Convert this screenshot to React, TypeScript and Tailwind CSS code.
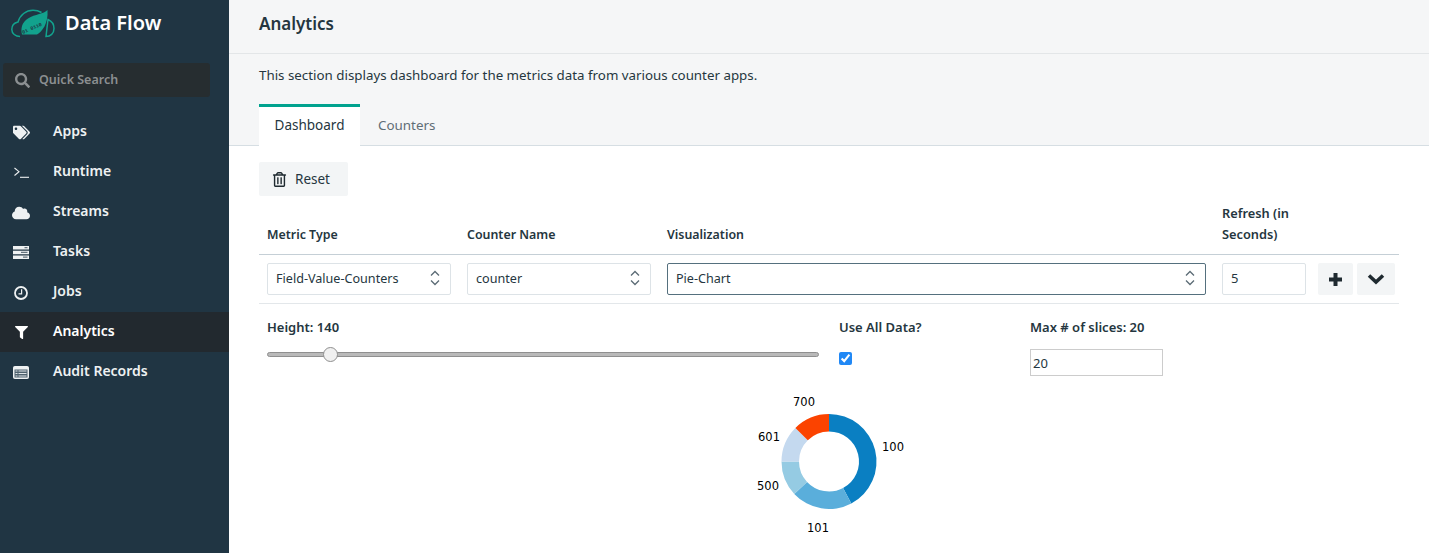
import { FaCloud, FaFilter, FaRegTrashAlt, FaSearch, FaTags } from 'react-icons/fa';
import type { ReactNode } from 'react';

function TerminalIcon() {
  return (
    <svg width="15" height="11" viewBox="0 0 15 11" fill="none" stroke="currentColor" strokeWidth="1.1">
      <path d="M.5 1 5 4.700 .5 8.500" />
      <path d="M6 10.300H15" />
    </svg>
  );
}

function TasksIcon() {
  return (
    <svg width="16" height="13" viewBox="0 0 16 13">
      <path d="M0 0h16v3.500H0zM0 4.700h16v3.500H0zM0 9.500h16V13H0z" fill="#eef1f2" />
      <path d="M11.500 1h3v1.200h-3zM8 5.800h6.500V7H8zM10 10.600h4.500v1.200H10z" fill="#66757f" />
    </svg>
  );
}

function ClockIcon() {
  return (
    <svg width="14" height="14" viewBox="0 0 14 14" fill="none" stroke="currentColor">
      <circle cx="7" cy="7" r="6" strokeWidth="1.800" />
      <path d="M7.600 3.200V7.800H4.500" strokeWidth="1.200" />
    </svg>
  );
}

function AuditIcon() {
  return (
    <svg width="16" height="13" viewBox="0 0 16 13" fill="none">
      <rect x="0.5" y="0.5" width="15" height="12" rx="1" fill="#eef1f2" stroke="#eef1f2" />
      <rect x="1.500" y="3.500" width="13" height="8" fill="#4f626e" />
      <path d="M2.500 5h2M5.500 5h8M2.500 7.500h2M5.500 7.500h8M2.500 10h2M5.500 10h8" stroke="#dfe4e7" strokeWidth="1.100" />
    </svg>
  );
}

function Logo() {
  return (
    <svg width="44" height="29" viewBox="0 0 44 29" fill="none">
      {/* cloud outline */}
      <path
        d="M9 27.500C4.500 27.500 .8 24.500 .8 20.500 .8 16.500 3.500 13.800 7 13 9 6 15 1.200 22 1.200 25 1.200 28 2 30.500 3.500M37 10.500C40.500 12 43 15.500 43 19.500 43 24.500 39.500 27.500 35 27.500Z"
        stroke="#12a28d"
        strokeWidth="1.500"
      />
      {/* leaf */}
      <path d="M36.500 1C33 5 24 5 17 9.500 11 13.500 9.500 19 11 25.500H26C31 22.500 37.500 15 36.500 1Z" fill="#12a28d" />
      <text
        x="12"
        y="25"
        transform="rotate(-24 12 25)"
        fontSize="5"
        fontWeight="700"
        fill="#203543"
        fontFamily="Liberation Mono, monospace"
      >
        01 0110
      </text>
    </svg>
  );
}

const navItems: { label: string; icon: ReactNode; active?: boolean }[] = [
  { label: 'Apps', icon: <FaTags size={17} /> },
  { label: 'Runtime', icon: <TerminalIcon /> },
  { label: 'Streams', icon: <FaCloud size={18} /> },
  { label: 'Tasks', icon: <TasksIcon /> },
  { label: 'Jobs', icon: <ClockIcon /> },
  { label: 'Analytics', icon: <FaFilter size={13} />, active: true },
  { label: 'Audit Records', icon: <AuditIcon /> },
];

function Chevrons() {
  return (
    <svg
      className="absolute right-[11px] top-[7px] pointer-events-none text-[#5b6b75]"
      width="10"
      height="16"
      viewBox="0 0 10 16"
      fill="none"
      stroke="currentColor"
      strokeWidth="1.3"
    >
      <path d="M1 5.500 5 1.500 9 5.500" />
      <path d="M1 10.500 5 14.500 9 10.500" />
    </svg>
  );
}

function Select({ value, dark }: { value: string; dark?: boolean }) {
  return (
    <div className="relative">
      <select
        defaultValue={value}
        className={`block w-full h-8 appearance-none rounded-[2px] border bg-white pl-2 pr-6 text-[12.6px] text-[#253640] ${dark ? 'border-[#55707e]' : 'border-[#dde3e7]'}`}
      >
        <option>{value}</option>
      </select>
      <Chevrons />
    </div>
  );
}

// arc between two angles measured clockwise from the top
function arc(from: number, to: number) {
  const cx = 829;
  const cy = 461.5;
  const R = 47.5;
  const r = 30;
  const pt = (rad: number, a: number) => {
    const t = (a * Math.PI) / 180;
    return `${(cx + rad * Math.sin(t)).toFixed(2)} ${(cy - rad * Math.cos(t)).toFixed(2)}`;
  };
  const large = to - from > 180 ? 1 : 0;
  return `M${pt(R, from)}A${R} ${R} 0 ${large} 1 ${pt(R, to)}L${pt(r, to)}A${r} ${r} 0 ${large} 0 ${pt(r, from)}Z`;
}

const slices = [
  { from: 0, to: 152, color: '#0a7fc2' },
  { from: 152, to: 227, color: '#5aaedb' },
  { from: 227, to: 270, color: '#95cbe3' },
  { from: 270, to: 315, color: '#c4d9ef' },
  { from: 315, to: 360, color: '#fb4300' },
];

const labels = [
  { text: '100', x: 893, y: 451 },
  { text: '101', x: 818, y: 532 },
  { text: '500', x: 768, y: 490 },
  { text: '601', x: 769, y: 441 },
  { text: '700', x: 804, y: 406 },
];

export default function App() {
  return (
    <div className="flex h-screen overflow-hidden bg-white text-[13px] text-[#253640] font-['Noto_Sans','Liberation_Sans',sans-serif]">
      {/* Sidebar */}
      <aside className="w-[229px] shrink-0 bg-[#203543] text-[#eef1f2]">
        <div className="flex h-[44px] items-center pl-[11px] pt-[2px]">
          <Logo />
          <span className="ml-[10px] text-[20px] font-semibold text-white">Data Flow</span>
        </div>
        <div className="ml-[3px] mt-[19px] flex h-[34px] w-[207px] items-center gap-[9px] rounded-[3px] bg-[#262d30] pl-3 text-[#8b8f91]">
          <FaSearch size={15} />
          <span className="text-[12.5px] font-semibold">Quick Search</span>
        </div>
        <nav className="mt-[15px]">
          {navItems.map((item) => (
            <div key={item.label} className={`flex h-10 items-center ${item.active ? 'bg-[#22292f] text-white' : ''}`}>
              <span className="mt-[1px] flex w-[53px] justify-center pr-[11px]">{item.icon}</span>
              <span className="mb-[4px] text-[14px] font-semibold">{item.label}</span>
            </div>
          ))}
        </nav>
      </aside>

      {/* Main */}
      <main className="min-w-0 flex-1">
        <header className="flex h-[54px] items-center border-b border-[#e3e6e8] bg-[#f5f6f7] px-[30px] pb-[6px]">
          <h1 className="text-[17px] font-semibold">Analytics</h1>
        </header>

        <div className="h-[92px] border-b border-[#d6dee3] bg-[#f5f6f7] px-[30px]">
          <p className="pt-[12px] text-[13.33px] leading-[18px]">
            This section displays dashboard for the metrics data from various counter apps.
          </p>
          <div className="mt-[20px] flex items-start">
            <div className="flex h-[43px] w-[101px] items-center justify-center border-t-[3px] border-[#00a28e] bg-white pb-[4px] text-[13.5px]">
              Dashboard
            </div>
            <div className="ml-[18px] flex h-[43px] items-center pb-[1px] text-[13.4px] text-[#5f6d76]">Counters</div>
          </div>
        </div>

        <div className="px-[30px]">
          <button className="mt-4 flex h-[34px] w-[89px] items-center gap-[8px] rounded-[2px] bg-[#f3f5f6] pl-[13px] text-[13.5px]">
            <FaRegTrashAlt size={15} className="text-[#1f2a30]" />
            Reset
          </button>

          <div className="mt-[7px] grid grid-cols-[200px_200px_555px_100px_85px] items-end border-b border-[#c5cfd6] pb-[9px] text-[12.4px] font-semibold leading-[21px]">
            <div className="px-2">Metric Type</div>
            <div className="px-2">Counter Name</div>
            <div className="px-2">Visualization</div>
            <div className="px-2 text-[12.8px]">Refresh (in Seconds)</div>
            <div />
          </div>

          <div className="grid h-[49px] grid-cols-[200px_200px_555px_100px_85px] items-start border-b border-[#e3e7ea] pt-2">
            <div className="px-2"><Select value="Field-Value-Counters" /></div>
            <div className="px-2"><Select value="counter" /></div>
            <div className="px-2"><Select value="Pie-Chart" dark /></div>
            <div className="px-2">
              <input
                readOnly
                value="5"
                className="block h-8 w-full rounded-[2px] border border-[#dde3e7] pb-[2px] pl-2 text-[13px]"
              />
            </div>
            <div className="flex gap-1 pl-1">
              <button className="flex h-8 w-[35px] items-center justify-center rounded-[2px] bg-[#f3f5f6] text-[#1f2a30]">
                <svg width="15" height="15" viewBox="0 0 15 15" fill="currentColor">
                  <path d="M5.500 1h4v4.500H14v4H9.500V14h-4V9.500H1v-4h4.500Z" />
                </svg>
              </button>
              <button className="flex h-8 w-[38px] items-center justify-center rounded-[2px] bg-[#f3f5f6] text-[#1f2a30]">
                <svg width="18" height="12" viewBox="0 0 18 12" fill="none" stroke="currentColor" strokeWidth="3.600">
                  <path d="M2 2.500 9 9 16 2.500" />
                </svg>
              </button>
            </div>
          </div>

          <div className="mt-[14px] flex pl-2 font-semibold">
            <div className="w-[572px]">
              <div className="leading-[18px]">Height: 140</div>
              <div className="relative mt-[16px] h-[5px] w-[552px] rounded-full border border-[#8f8f8f] bg-[#b9b9b9]">
                <span className="absolute left-[55px] top-[-6px] h-[15px] w-[15px] rounded-full border border-[#8f8f8f] bg-[#f0f0f0]" />
              </div>
            </div>
            <div className="w-[191px]">
              <div className="leading-[18px]">Use All Data?</div>
              <input readOnly type="checkbox" checked className="mt-[16px] block h-[13px] w-[13px] accent-[#2188f5]" />
            </div>
            <div>
              <div className="leading-[18px]">Max # of slices: 20</div>
              <input
                readOnly
                value="20"
                className="mt-[13px] block h-[27px] w-[133px] border border-[#cccccc] pl-[2px] text-[13px] font-normal"
              />
            </div>
          </div>

          {/* Donut chart */}
          <div className="mt-[9px] flex justify-center">
            <svg width="200" height="160" viewBox="729 385 200 160" className="mr-[1px]">
              {slices.map((s) => (
                <path key={s.from} d={arc(s.from, s.to)} fill={s.color} />
              ))}
              {labels.map((l) => (
                <text key={l.text} x={l.x} y={l.y} textAnchor="middle" fontSize="11.500" fill="#000" fontFamily="DejaVu Sans, sans-serif">
                  {l.text}
                </text>
              ))}
            </svg>
          </div>
        </div>
      </main>
    </div>
  );
}
